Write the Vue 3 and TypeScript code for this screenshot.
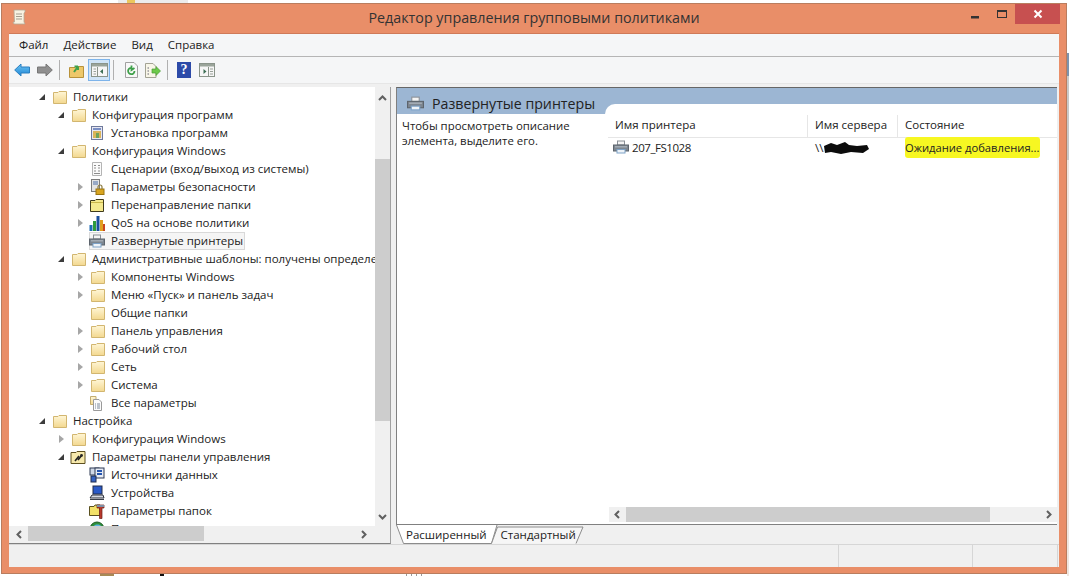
<script setup lang="ts">
interface Row { label: string; level: number; arrow: '' | 'open' | 'closed'; icon: string; selected?: boolean }
const rows: Row[] = [
  { label: 'Политики', level: 0, arrow: 'open', icon: 'folder' },
  { label: 'Конфигурация программ', level: 1, arrow: 'open', icon: 'folder' },
  { label: 'Установка программ', level: 2, arrow: '', icon: 'install' },
  { label: 'Конфигурация Windows', level: 1, arrow: 'open', icon: 'folder' },
  { label: 'Сценарии (вход/выход из системы)', level: 2, arrow: '', icon: 'script' },
  { label: 'Параметры безопасности', level: 2, arrow: 'closed', icon: 'security' },
  { label: 'Перенаправление папки', level: 2, arrow: 'closed', icon: 'redirect' },
  { label: 'QoS на основе политики', level: 2, arrow: 'closed', icon: 'qos' },
  { label: 'Развернутые принтеры', level: 2, arrow: '', icon: 'printer', selected: true },
  { label: 'Административные шаблоны: получены определения политик', level: 1, arrow: 'open', icon: 'folder' },
  { label: 'Компоненты Windows', level: 2, arrow: 'closed', icon: 'folder' },
  { label: 'Меню «Пуск» и панель задач', level: 2, arrow: 'closed', icon: 'folder' },
  { label: 'Общие папки', level: 2, arrow: '', icon: 'folder' },
  { label: 'Панель управления', level: 2, arrow: 'closed', icon: 'folder' },
  { label: 'Рабочий стол', level: 2, arrow: 'closed', icon: 'folder' },
  { label: 'Сеть', level: 2, arrow: 'closed', icon: 'folder' },
  { label: 'Система', level: 2, arrow: 'closed', icon: 'folder' },
  { label: 'Все параметры', level: 2, arrow: '', icon: 'allsettings' },
  { label: 'Настройка', level: 0, arrow: 'open', icon: 'folder' },
  { label: 'Конфигурация Windows', level: 1, arrow: 'closed', icon: 'folder' },
  { label: 'Параметры панели управления', level: 1, arrow: 'open', icon: 'panel' },
  { label: 'Источники данных', level: 2, arrow: '', icon: 'datasource' },
  { label: 'Устройства', level: 2, arrow: '', icon: 'device' },
  { label: 'Параметры папок', level: 2, arrow: '', icon: 'folderopts' },
  { label: 'Параметры интернета', level: 2, arrow: '', icon: 'globe' },
]
const menu = ['Файл', 'Действие', 'Вид', 'Справка']
</script>

<template>
  <div class="screen">
    <svg class="defs" width="0" height="0">
      <defs>
        <linearGradient id="fg" x1="0" y1="0" x2="0" y2="1">
          <stop offset="0" stop-color="#fff6d6" />
          <stop offset="1" stop-color="#f3d88f" />
        </linearGradient>
        <linearGradient id="bl" x1="0" y1="0" x2="0" y2="1">
          <stop offset="0" stop-color="#6cc4f2" />
          <stop offset="1" stop-color="#1f86d6" />
        </linearGradient>
        <symbol id="folder" viewBox="0 0 16 16">
          <path d="M2.5 3.5 L2.5 14.5 L15.5 14.5 L15.5 2.5 L8 2.5 L7 3.5 Z" fill="url(#fg)" stroke="#d2b670" />
        </symbol>
        <symbol id="install" viewBox="0 0 16 16">
          <rect x="2.5" y="1.5" width="11" height="13" fill="#e8e8f2" stroke="#6f7a9c" />
          <rect x="4" y="6" width="8" height="7" fill="#d9b45a" />
          <rect x="4" y="3" width="8" height="2" fill="#7b8fc4" />
          <rect x="7" y="8" width="3" height="5" fill="#6fa35c" />
        </symbol>
        <symbol id="script" viewBox="0 0 16 16">
          <path d="M3.5 1.5 H12.5 V14.5 H3.5 Z" fill="#fbfbfb" stroke="#b4b4b4" />
          <path d="M5 4.5 H7 M9 4.5 H11 M5 7 H7 M9 7 H11 M5 10 H7 M9 10 H11 M5 12.5 H11" stroke="#8d8d8d" />
        </symbol>
        <symbol id="security" viewBox="0 0 16 16">
          <rect x="2.5" y="0.5" width="8" height="12" fill="#e4e4e4" stroke="#7c7c7c" />
          <path d="M4 3 H9 M4 5 H9" stroke="#4c6fa8" />
          <rect x="7" y="10" width="8" height="5.5" fill="#d9a520" stroke="#9a7410" />
          <path d="M9 10 V8 A2 2 0 0 1 13 8 V10" fill="none" stroke="#8a7a40" stroke-width="1.2" />
        </symbol>
        <symbol id="redirect" viewBox="0 0 16 16">
          <path d="M1.5 3.5 L1.5 14.5 L14.5 14.5 L14.5 2.5 L7 2.5 L6 3.5 Z" fill="#f5e98e" stroke="#3f3a1c" />
          <path d="M2 5.5 H14" stroke="#c9b64a" />
        </symbol>
        <symbol id="qos" viewBox="0 0 16 16">
          <rect x="0.5" y="10" width="3" height="6" fill="#1f6db5" />
          <rect x="4" y="6" width="3" height="10" fill="#2e9a3a" />
          <rect x="7.5" y="1" width="3" height="15" fill="#1a4f9e" />
          <rect x="11" y="5" width="3" height="11" fill="#e0a020" />
          <rect x="14" y="9" width="2" height="7" fill="#c9451e" />
        </symbol>
        <symbol id="printer" viewBox="0 0 16 16">
          <rect x="4.5" y="2" width="7" height="4" fill="#f4f4f4" stroke="#8a8f96" />
          <rect x="0.5" y="6" width="15" height="6" fill="#7d8690" stroke="#5d646c" />
          <rect x="2" y="7" width="12" height="1.5" fill="#a3abb3" />
          <rect x="4" y="10.5" width="8" height="3.5" fill="#eef3f8" stroke="#7ea3c8" />
        </symbol>
        <symbol id="allsettings" viewBox="0 0 16 16">
          <path d="M1.5 1.5 H7 V9.5 H1.5 Z" fill="url(#fg)" stroke="#c4ad70" />
          <path d="M4.5 4.5 H10 L12.5 7 V15.5 H4.5 Z" fill="#fbfbfb" stroke="#9a9a9a" />
          <path d="M6 9 H7 M8 9 H11 M6 11 H7 M8 11 H11 M6 13 H7 M8 13 H11" stroke="#7d8a9c" />
        </symbol>
        <symbol id="panel" viewBox="0 0 16 16">
          <path d="M1 3.5 L1 14.5 L15 14.5 L15 2.5 L7 2.5 L6 3.5 Z" fill="#f7e9ac" stroke="#5e5020" />
          <path d="M5 12 L9 7 M8 11 L12 6" stroke="#232323" stroke-width="1.6" />
          <circle cx="11.5" cy="6.5" r="1.4" fill="#2a2a2a" />
        </symbol>
        <symbol id="datasource" viewBox="0 0 16 16">
          <rect x="1" y="1" width="9" height="7" fill="#cfd8e6" stroke="#2e3a55" />
          <rect x="6" y="1" width="9" height="10" fill="#e7ecf5" stroke="#2e3a55" />
          <rect x="8" y="3" width="5" height="2" fill="#2555b0" />
          <rect x="8" y="6" width="5" height="2" fill="#2555b0" />
          <rect x="2" y="9" width="5" height="6" fill="#3563c2" stroke="#1f2d4f" />
        </symbol>
        <symbol id="device" viewBox="0 0 16 16">
          <rect x="4" y="1" width="9" height="8" fill="#2a5ac8" stroke="#222c4a" />
          <path d="M3 10 H14 L15 13 H1 Z" fill="#d6d9e0" stroke="#2b2f3a" />
          <path d="M1 14.5 H15" stroke="#3a3f4a" />
        </symbol>
        <symbol id="folderopts" viewBox="0 0 16 16">
          <path d="M0.5 3.5 V12.5 H11 V2 H6 L5 3.5 Z" fill="#f3e168" stroke="#5a5020" />
          <path d="M8 2 H15 V5 H13 V15.5 H10.5 V5 H8 Z" fill="#b8382c" stroke="#6a1c14" stroke-width="0.7" />
          <path d="M8 2 H15 V4 H8 Z" fill="#7c8fa6" />
        </symbol>
        <symbol id="globe" viewBox="0 0 16 16">
          <circle cx="8" cy="8" r="7" fill="#2f8f3a" stroke="#1d5b25" />
          <path d="M4 6 C6 3 10 3 12 5 L10 8 L6 8 Z" fill="#5bb3e0" />
        </symbol>
      </defs>
    </svg>

    <div class="strip-top"><span class="strip-folder"></span></div>
    <div class="strip-right"></div>
    <div class="strip-bottom b1"></div>
    <div class="strip-bottom b2"></div>
    <div class="strip-bottom b3"></div>

    <div class="window">
      <header class="titlebar">
        <svg class="app-icon" width="14" height="16" viewBox="0 0 14 16">
          <path d="M2 1 H13 V3 L12 4 V13 L13 15 H2 L1 13 H2.5 Z" fill="#f8f2e2" stroke="#b3aa98" stroke-width="0.8" />
          <path d="M4 5 H10 M4 7.5 H10 M4 10 H10" stroke="#a59e90" />
        </svg>
        <h1 class="title">Редактор управления групповыми политиками</h1>
        <div class="controls">
          <svg class="ctl" width="28" height="20" viewBox="0 0 28 20"><rect x="12" y="12" width="8" height="2.5" fill="#333" /></svg>
          <svg class="ctl" width="28" height="20" viewBox="0 0 28 20"><rect x="10.5" y="6.5" width="9" height="7" fill="none" stroke="#333" /><rect x="10" y="6" width="10" height="2" fill="#333" /></svg>
          <div class="close">
            <svg width="10" height="10" viewBox="0 0 10 10"><path d="M1.5 1.5 L8.5 8.5 M8.5 1.5 L1.5 8.5" stroke="#fff" stroke-width="2" /></svg>
          </div>
        </div>
      </header>

      <div class="client">
        <nav class="menubar">
          <span v-for="m in menu" :key="m">{{ m }}</span>
        </nav>

        <div class="toolbar">
          <svg class="tb back" width="16" height="14" viewBox="0 0 16 14"><path d="M0.7 7 L7 1 V4 H15.5 V10 H7 V13 Z" fill="url(#bl)" stroke="#2a7fc0" /></svg>
          <svg class="tb forward" width="16" height="14" viewBox="0 0 16 14"><path d="M15.3 7 L9 1 V4 H0.5 V10 H9 V13 Z" fill="#8f8f8f" stroke="#777" /></svg>
          <span class="sep s1"></span>
          <svg class="tb up" width="15" height="15" viewBox="0 0 15 15">
            <path d="M0.5 4.5 V14.5 H14.5 V3.5 H7 L6 4.5 Z" fill="#eec86a" stroke="#b8923a" />
            <path d="M5 9 L9 3.5 M9 3.5 H5.5 M9 3.5 V7" fill="none" stroke="#3ea04a" stroke-width="2" />
          </svg>
          <span class="tb-active">
            <svg width="17" height="14" viewBox="0 0 17 14">
              <rect x="0.5" y="0.5" width="16" height="13" fill="#f6f6f6" stroke="#8a948a" />
              <rect x="1" y="1" width="15" height="2.5" fill="#9aa49a" />
              <path d="M6.5 4 V13" stroke="#8a948a" />
              <path d="M2.5 6 H5 M2.5 8.5 H5 M2.5 11 H5" stroke="#99a199" />
              <path d="M12 6 V11 L9 8.5 Z" fill="#3d6f55" />
            </svg>
          </span>
          <span class="sep s2"></span>
          <svg class="tb refresh" width="15" height="16" viewBox="0 0 15 16">
            <path d="M1.5 0.5 H10 L13.5 4 V15.5 H1.5 Z" fill="#f8f8f8" stroke="#a0a0a0" />
            <path d="M10.5 9 A3.2 3.2 0 1 1 7.5 5.8 M7.5 3.5 V8 L10.5 6" fill="none" stroke="#3ea04a" stroke-width="1.8" />
          </svg>
          <svg class="tb export" width="16" height="15" viewBox="0 0 16 15">
            <path d="M0.5 0.5 H8 L11 3.5 V14.5 H0.5 Z" fill="#f8f6e8" stroke="#a3a394" />
            <path d="M2.5 5 H4 M2.5 8 H4 M2.5 11 H4" stroke="#667" />
            <path d="M7 6 H11 V3.5 L15.5 8 L11 12.5 V10 H7 Z" fill="#6cc94a" stroke="#4a9c34" stroke-width="0.7" />
          </svg>
          <span class="sep s3"></span>
          <span class="help">?</span>
          <svg class="tb view" width="16" height="14" viewBox="0 0 16 14">
            <rect x="0.5" y="0.5" width="15" height="13" fill="#f6f6f6" stroke="#8a948a" />
            <rect x="1" y="1" width="14" height="2.5" fill="#9aa49a" />
            <path d="M9.5 4 V13" stroke="#8a948a" />
            <path d="M11 6 H14 M11 8.5 H14 M11 11 H14" stroke="#99a199" />
            <path d="M4.5 6 V11 L7.5 8.5 Z" fill="#3d6f55" />
          </svg>
        </div>

        <div class="panes">
          <section class="tree-pane">
            <div class="tree-main">
              <div class="tree">
                <div v-for="(r, i) in rows" :key="i" class="row" :class="`lv${r.level}`">
                  <span class="arrow" :class="r.arrow"></span>
                  <span class="node" :class="{ selected: r.selected }">
                    <svg class="icon" width="16" height="16"><use :href="`#${r.icon}`" /></svg>
                    <span class="row-text">{{ r.label }}</span>
                  </span>
                </div>
              </div>
              <div class="vscroll">
                <span class="chev">
                  <svg width="9" height="6" viewBox="0 0 9 6"><path d="M1 5 L4.5 1.5 L8 5" fill="none" stroke="#606060" stroke-width="2" /></svg>
                </span>
                <div class="vtrack"><div class="vthumb"></div></div>
                <span class="chev">
                  <svg width="9" height="6" viewBox="0 0 9 6"><path d="M1 1 L4.5 4.5 L8 1" fill="none" stroke="#606060" stroke-width="2" /></svg>
                </span>
              </div>
            </div>
            <div class="tree-h">
              <svg class="hchev" width="6" height="9" viewBox="0 0 6 9"><path d="M5 1 L1.5 4.5 L5 8" fill="none" stroke="#606060" stroke-width="2" /></svg>
              <span class="tree-thumb"></span>
              <span class="hfill"></span>
              <svg class="hchev" width="6" height="9" viewBox="0 0 6 9"><path d="M1 1 L4.5 4.5 L1 8" fill="none" stroke="#606060" stroke-width="2" /></svg>
            </div>
          </section>

          <section class="right-pane">
            <div class="details">
              <div class="banner">
                <svg class="banner-icon" width="17" height="17"><use href="#printer" /></svg>
                <span class="banner-text">Развернутые принтеры</span>
                <span class="banner-rest"></span>
              </div>
              <div class="body">
                <p class="hint">Чтобы просмотреть описание элемента, выделите его.</p>
                <div class="list">
                  <div class="list-head">
                    <span class="col c1">Имя принтера</span>
                    <span class="col c2">Имя сервера</span>
                    <span class="col c3">Состояние</span>
                  </div>
                  <div class="list-row">
                    <span class="cell c1"><svg width="16" height="16"><use href="#printer" /></svg><span class="pname">207_FS1028</span></span>
                    <span class="cell c2">\\<svg class="scribble" width="46" height="13" viewBox="0 0 46 13"><path d="M1 5 L8 2 L14 4 L22 1 L26 4 L34 5 L44 4 L46 8 L40 12 L28 11 L18 13 L8 11 L2 12 Z" fill="#0c0c0c" /></svg></span>
                    <span class="cell c3"><span class="mark">Ожидание добавления...</span></span>
                  </div>
                </div>
              </div>
              <div class="list-h">
                <svg class="hchev" width="6" height="9" viewBox="0 0 6 9"><path d="M5 1 L1.5 4.5 L5 8" fill="none" stroke="#606060" stroke-width="2" /></svg>
                <span class="lthumb"></span>
                <span class="hfill"></span>
                <svg class="hchev" width="6" height="9" viewBox="0 0 6 9"><path d="M1 1 L4.5 4.5 L1 8" fill="none" stroke="#606060" stroke-width="2" /></svg>
              </div>
            </div>
            <div class="tabs">
              <svg class="tab-shape" width="200" height="19" viewBox="0 0 200 19">
                <path d="M0.5 0 L7.5 18.5 H95.5 L101 0 Z" fill="#fff" />
                <path d="M0.5 0 L7.5 18.5 H95.5 L101 0" fill="none" stroke="#8c8c8c" />
                <path d="M95.5 18.5 L101.5 2 H187 L180 18.5" fill="#f6f6f6" stroke="#8c8c8c" />
              </svg>
              <span class="tab t1">Расширенный</span>
              <span class="tab t2">Стандартный</span>
            </div>
          </section>
        </div>

        <footer class="status">
          <span class="st st1"></span>
          <span class="st st2"></span>
          <span class="st st3"></span>
        </footer>
      </div>
    </div>
  </div>
</template>

<style>
html, body { margin: 0; background: #fff; overflow: hidden; }
</style>

<style scoped>
.screen { position: relative; width: 1069px; height: 576px; overflow: hidden; background: #fff; font-family: "Open Sans", "Noto Sans", sans-serif; font-size: 11.5px; color: #222; }
.defs { position: absolute; }
.strip-top { position: absolute; left: 118px; top: 0; width: 70px; height: 3px; background: #ececec; }
.strip-folder { display: block; width: 8px; height: 3px; margin-left: 9px; background: #ecc85c; }
.strip-right { position: absolute; left: 1067px; top: 0; width: 2px; height: 576px; background: linear-gradient(#fff 0 53px, #7d93ad 53px 76px, #c9c9c9 76px 160px, #efe6e0 160px); }
.strip-bottom { position: absolute; top: 574px; height: 2px; }
.b1 { left: 100px; width: 14px; background: #a88a55; }
.b2 { left: 160px; width: 4px; background: #111; }
.b3 { left: 406px; width: 20px; background: repeating-linear-gradient(90deg, #999 0 1px, #fff 1px 5px); }
.window { position: absolute; left: 1px; top: 3px; width: 1066px; height: 571px; background: #e98e68; border: 1px solid #b97d5f; box-sizing: border-box; display: flex; flex-direction: column; padding: 0 7px 6px 7px; }
.titlebar { height: 29px; flex: none; display: flex; align-items: center; position: relative; }
.app-icon { margin-left: 3px; margin-top: -4px; }
.title { position: absolute; left: 0; right: 0; top: 4px; margin: 0; text-align: center; font-size: 14.3px; font-weight: 400; line-height: 20px; color: #333; }
.controls { margin-left: auto; margin-right: -1px; display: flex; align-items: flex-start; align-self: flex-start; }
.close { width: 45px; height: 20px; background: #c75050; display: flex; align-items: center; justify-content: center; }
.client { flex: 1; background: #f0f0f0; display: flex; flex-direction: column; min-height: 0; border-top: 1px solid #cf7a58; }
.menubar { height: 20px; padding: 0 0 2px 10px; flex: none; display: flex; gap: 15px; align-items: center; background: #f5f6f7; border-bottom: 1px solid #b5b5b5; }
.toolbar { height: 26px; flex: none; display: flex; align-items: center; padding-left: 5px; background: #f5f6f7; border-bottom: 1px solid #e6e6e6; }
.tb { flex: none; }
.forward { margin-left: 7px; }
.sep { width: 1px; height: 20px; background: #b0b0b0; flex: none; }
.s1 { margin-left: 6px; }
.up { margin-left: 9px; }
.tb-active { width: 22px; height: 22px; margin-left: 4px; flex: none; display: flex; align-items: center; justify-content: center; background: #cfe4f7; border: 1px solid #7eb4ea; box-sizing: border-box; }
.s2 { margin-left: 3px; }
.refresh { margin-left: 10px; }
.export { margin-left: 6px; }
.s3 { margin-left: 6px; }
.help { width: 14px; height: 16px; margin-left: 9px; flex: none; background: #2c4aa8; color: #fff; font-weight: 700; font-size: 14px; line-height: 16px; text-align: center; font-family: "Liberation Serif", serif; }
.view { margin-left: 8px; }
.panes { flex: 1; min-height: 0; display: flex; gap: 5px; padding: 3px 2px 0 0; background: #f0f0f0; }
.tree-pane { width: 382px; flex: none; display: flex; flex-direction: column; background: #fff; border-right: 1px solid #a0a0a0; border-bottom: 1px solid #808080; box-sizing: border-box; }
.tree-main { flex: 1; min-height: 0; display: flex; overflow: hidden; }
.tree { flex: 1; min-width: 0; overflow: hidden; padding-top: 1px; }
.row { height: 18px; display: flex; align-items: center; white-space: nowrap; }
.lv0 { padding-left: 30px; }
.lv1 { padding-left: 49px; }
.lv2 { padding-left: 68px; }
.arrow { width: 12px; height: 18px; flex: none; position: relative; }
.arrow.open::after { content: ""; position: absolute; left: 0; top: 6px; width: 0; height: 0; border-style: solid; border-width: 0 0 6px 6px; border-color: transparent transparent #3c3c3c transparent; }
.arrow.closed::after { content: ""; position: absolute; left: 1px; top: 5px; width: 0; height: 0; border-style: solid; border-width: 4px 0 4px 5px; border-color: transparent transparent transparent #a6a6a6; }
.node { display: flex; align-items: center; height: 18px; padding-right: 2px; }
.node.selected { background: #f5f5f5; box-shadow: inset 0 0 0 1px #d9d9d9; }
.icon { flex: none; margin-right: 6px; }
.row-text { line-height: 18px; }
.vscroll { width: 15px; flex: none; display: flex; flex-direction: column; padding: 2px 0 1px; background: #f0f0f0; }
.chev { height: 17px; flex: none; display: flex; align-items: center; justify-content: center; }
.vtrack { flex: 1; position: relative; }
.vthumb { position: absolute; left: 0; right: 0; top: 53px; height: 262px; background: #cdcdcd; }
.tree-h { height: 17px; flex: none; display: flex; align-items: center; background: #f0f0f0; padding: 0 23px 0 7px; }
.tree-thumb { width: 176px; height: 15px; margin-left: 6px; align-self: flex-start; background: #cdcdcd; flex: none; }
.hfill { flex: 1; }
.hchev { flex: none; }
.right-pane { flex: 1; min-width: 0; display: flex; flex-direction: column; }
.details { flex: 1; min-height: 0; display: flex; flex-direction: column; background: #fff; border-left: 1px solid #808080; border-top: 1px solid #666; border-bottom: 1px solid #808080; }
.banner { height: 26px; flex: none; background: #9cb6d3; display: flex; align-items: flex-start; padding-left: 10px; }
.banner-icon { margin-top: 7px; flex: none; }
.banner-text { width: 173px; flex: none; margin-top: 6px; margin-left: 8px; font-size: 14.2px; line-height: 20px; color: #222; white-space: nowrap; }
.banner-rest { flex: 1; height: 10px; margin-top: 16px; background: #fff; border-top-left-radius: 10px; }
.body { flex: 1; min-height: 0; display: flex; }
.hint { width: 211px; flex: none; margin: 0; padding: 4px 0 0 5px; box-sizing: border-box; font-size: 11.4px; line-height: 15px; }
.list { flex: 1; min-width: 0; }
.list-head { height: 22px; display: flex; align-items: flex-start; border-bottom: 1px solid #e6e6e6; margin-top: 1px; }
.list-row { height: 18px; display: flex; align-items: center; }
.col, .cell { box-sizing: border-box; white-space: nowrap; }
.col { height: 22px; line-height: 20px; border-right: 1px solid #e6e6e6; }
.c1 { width: 200px; padding-left: 7px; }
.c2 { width: 90px; padding-left: 7px; }
.c3 { flex: 1; padding-left: 7px; border-right: 0; }
.cell.c1 { padding-left: 5px; display: flex; align-items: center; gap: 3px; }
.cell.c2 { display: flex; align-items: center; }
.pname { letter-spacing: -0.45px; }
.scribble { flex: none; }
.mark { background: #f7f722; padding: 3px 1px 3px 0; border-radius: 3px; font-size: 11.2px; }
.list-h { height: 15px; flex: none; display: flex; align-items: center; background: #f0f0f0; margin: 0 0 2px 212px; padding: 0 5px; }
.lthumb { width: 364px; height: 15px; margin-left: 6px; background: #cdcdcd; flex: none; }
.tabs { height: 19px; flex: none; display: flex; position: relative; }
.tab-shape { position: absolute; left: 0; top: 0; }
.tab { position: relative; height: 19px; line-height: 19px; white-space: nowrap; font-size: 11.5px; }
.t1 { margin-left: 10px; }
.t2 { margin-left: 14px; }
.status { height: 23px; flex: none; display: flex; border-top: 1px solid #d6d6d6; padding-right: 1px; box-sizing: border-box; }
.st { border-right: 1px solid #d6d6d6; box-sizing: border-box; }
.st1 { width: 830px; }
.st2 { width: 134px; }
.st3 { width: 85px; }
</style>
